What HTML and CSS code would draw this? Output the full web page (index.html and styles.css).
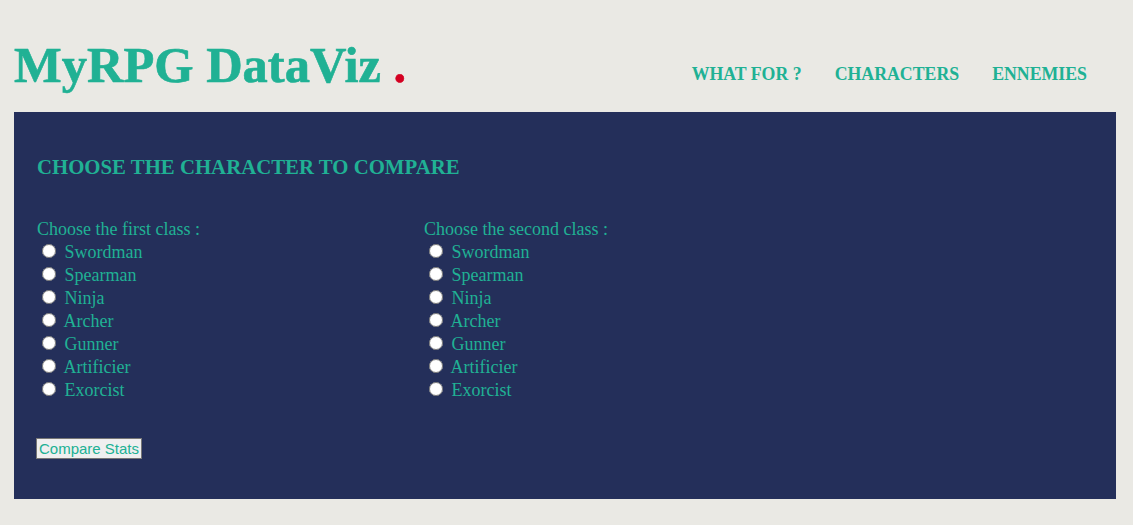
FILE: index.html
```html
<!DOCTYPE html>
<html lang="en">
<head>
<meta charset="utf-8">
<title>MyRPG DataViz</title>
<link rel="stylesheet" href="styles.css">
</head>
<body>
<header class="site-header">
  <h1 class="logo">MyRPG DataViz <span class="logo-dot">.</span></h1>
  <nav class="main-nav">
    <a href="#" class="nav-link">WHAT FOR ?</a>
    <a href="#" class="nav-link">CHARACTERS</a>
    <a href="#" class="nav-link">ENNEMIES</a>
  </nav>
</header>
<main class="panel">
  <h2 class="panel-title">CHOOSE THE CHARACTER TO COMPARE</h2>
  <form class="compare-form">
    <div class="columns">
      <fieldset class="class-group">
        <div class="group-label">Choose the first class :</div>
        <label class="option"><input type="radio" name="first"> Swordman</label>
        <label class="option"><input type="radio" name="first"> Spearman</label>
        <label class="option"><input type="radio" name="first"> Ninja</label>
        <label class="option"><input type="radio" name="first"> Archer</label>
        <label class="option"><input type="radio" name="first"> Gunner</label>
        <label class="option"><input type="radio" name="first"> Artificier</label>
        <label class="option"><input type="radio" name="first"> Exorcist</label>
      </fieldset>
      <fieldset class="class-group">
        <div class="group-label">Choose the second class :</div>
        <label class="option"><input type="radio" name="second"> Swordman</label>
        <label class="option"><input type="radio" name="second"> Spearman</label>
        <label class="option"><input type="radio" name="second"> Ninja</label>
        <label class="option"><input type="radio" name="second"> Archer</label>
        <label class="option"><input type="radio" name="second"> Gunner</label>
        <label class="option"><input type="radio" name="second"> Artificier</label>
        <label class="option"><input type="radio" name="second"> Exorcist</label>
      </fieldset>
    </div>
    <button type="button" class="compare-btn">Compare Stats</button>
  </form>
</main>
</body>
</html>
```
FILE: styles.css
```css
html, body {
  margin: 0;
  padding: 0;
}
body {
  background: #eae9e4;
  font-family: "Liberation Serif", "Times New Roman", serif;
  color: #20b194;
  padding: 0 17px 26px 14px;
}
.site-header {
  display: flex;
  justify-content: space-between;
  align-items: baseline;
  padding-top: 36px;
  margin-bottom: 18px;
}
.logo {
  margin: 0;
  font-size: 50.5px;
  line-height: 58px;
  font-weight: bold;
  color: #20b194;
  -webkit-text-stroke: 0.6px #20b194;
}
.logo-dot {
  color: #d40021;
  -webkit-text-stroke: 0.6px #d40021;
}
.main-nav {
  display: flex;
  gap: 33px;
  padding-right: 29px;
  position: relative;
  top: -2px;
}
.nav-link {
  font-size: 17.8px;
  font-weight: bold;
  color: #20b194;
  text-decoration: none;
}
.panel {
  display: block;
  background: #242f5a;
  height: 387px;
  box-sizing: border-box;
  padding: 43px 23px 0 23px;
}
.panel-title {
  margin: 0 0 39px 0;
  font-size: 20.8px;
  font-weight: bold;
  color: #20b194;
}
.columns {
  display: flex;
}
.class-group {
  border: 0;
  margin: 0;
  padding: 0;
  width: 387px;
  display: flex;
  flex-direction: column;
  font-size: 18px;
  line-height: 23px;
}
.group-label {
  color: #20b194;
}
.option {
  display: block;
  color: #20b194;
}
.option input {
  width: 14px;
  height: 14px;
  margin: 3px 4px 0 5px;
}
.compare-btn {
  margin-top: 36px;
  margin-left: -1px;
  font-family: "Liberation Sans", Arial, sans-serif;
  font-size: 15px;
  color: #20b194;
  background: #efefef;
  border: 1px solid #767676;
  border-radius: 0;
  padding: 1px 2px;
}
```
